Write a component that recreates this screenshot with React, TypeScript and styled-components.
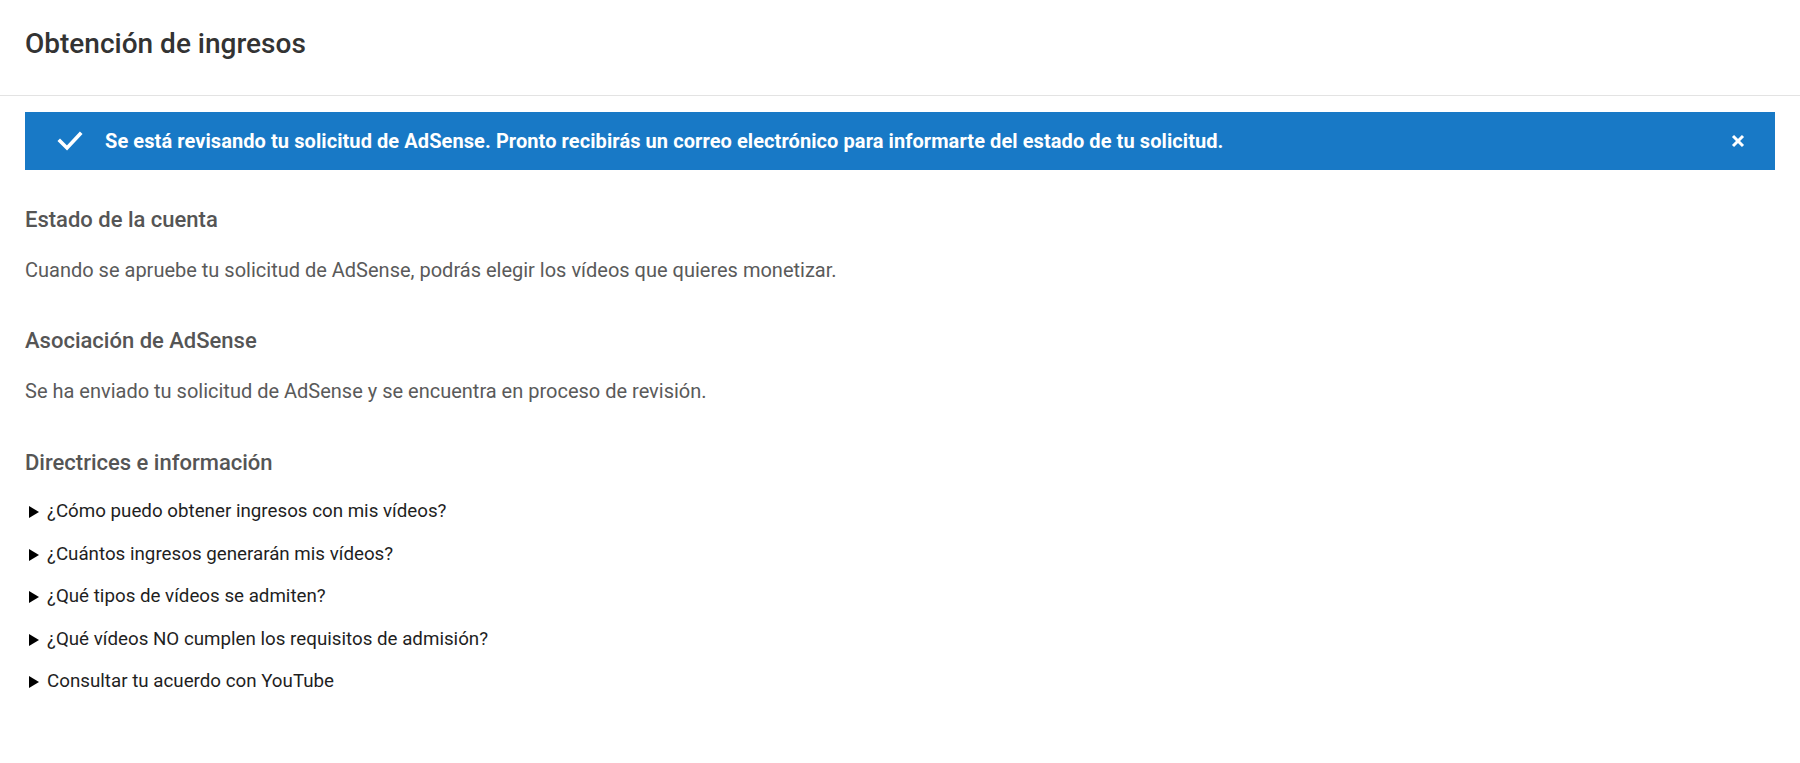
import styled, { createGlobalStyle } from "styled-components";

const GlobalStyle = createGlobalStyle`
  html, body {
    margin: 0;
    padding: 0;
    background: #ffffff;
  }
  body {
    font-family: Roboto, "Noto Sans", Arial, sans-serif;
    -webkit-font-smoothing: antialiased;
  }
  * {
    box-sizing: border-box;
  }
`;

const guidelines = [
  "¿Cómo puedo obtener ingresos con mis vídeos?",
  "¿Cuántos ingresos generarán mis vídeos?",
  "¿Qué tipos de vídeos se admiten?",
  "¿Qué vídeos NO cumplen los requisitos de admisión?",
  "Consultar tu acuerdo con YouTube",
];

const App = () => {
  return (
    <Page>
      <GlobalStyle />
      <Header>
        <Title>Obtención de ingresos</Title>
      </Header>
      <Main>
        <Banner>
          <CheckIcon viewBox="0 0 26 20">
            <polyline points="3,10 10,17 23,3" />
          </CheckIcon>
          <BannerText>
            Se está revisando tu solicitud de AdSense. Pronto recibirás un correo electrónico para
            informarte del estado de tu solicitud.
          </BannerText>
          <CloseButton aria-label="Cerrar">
            <svg viewBox="0 0 14 14" width="14" height="14">
              <line x1="2" y1="2" x2="12" y2="12" />
              <line x1="12" y1="2" x2="2" y2="12" />
            </svg>
          </CloseButton>
        </Banner>

        <Section $gap={38}>
          <SectionTitle>Estado de la cuenta</SectionTitle>
          <SectionText>
            Cuando se apruebe tu solicitud de AdSense, podrás elegir los vídeos que quieres monetizar.
          </SectionText>
        </Section>

        <Section $gap={47}>
          <SectionTitle>Asociación de AdSense</SectionTitle>
          <SectionText>Se ha enviado tu solicitud de AdSense y se encuentra en proceso de revisión.</SectionText>
        </Section>

        <Section $gap={48}>
          <SectionTitle>Directrices e información</SectionTitle>
          <GuideList>
            {guidelines.map((item) => (
              <GuideItem key={item}>
                <Arrow />
                <span>{item}</span>
              </GuideItem>
            ))}
          </GuideList>
        </Section>
      </Main>
    </Page>
  );
};

export default App;

const Page = styled.div`
  width: 100%;
  min-height: 763px;
  background: #ffffff;
`;

const Header = styled.header`
  height: 96px;
  padding: 28px 25px 0;
  border-bottom: 1px solid #e3e3e3;
`;

const Title = styled.h1`
  margin: 0;
  font-size: 28px;
  line-height: 32px;
  font-weight: 500;
  color: #333333;
`;

const Main = styled.main`
  padding: 16px 25px 0;
`;

const Banner = styled.div`
  height: 58px;
  background: #1879c6;
  display: flex;
  align-items: center;
  padding: 0 30px 0 32px;
`;

const CheckIcon = styled.svg`
  width: 26px;
  height: 20px;
  flex-shrink: 0;
  margin-right: 22px;
  polyline {
    fill: none;
    stroke: #ffffff;
    stroke-width: 3.6;
    stroke-linecap: square;
  }
`;

const BannerText = styled.p`
  flex: 1;
  margin: 0;
  font-size: 20px;
  line-height: 24px;
  font-weight: 700;
  letter-spacing: 0.08px;
  color: #ffffff;
`;

const CloseButton = styled.button`
  border: 0;
  background: transparent;
  padding: 0;
  width: 14px;
  height: 14px;
  display: flex;
  cursor: pointer;
  line {
    stroke: #ffffff;
    stroke-width: 3;
  }
`;

const Section = styled.section<{ $gap: number }>`
  margin-top: ${({ $gap }) => $gap}px;
`;

const SectionTitle = styled.h2`
  margin: 0;
  font-size: 22px;
  line-height: 24px;
  font-weight: 500;
  color: #555555;
`;

const SectionText = styled.p`
  margin: 26px 0 0;
  font-size: 20px;
  line-height: 24px;
  font-weight: 400;
  color: #5a5a5a;
`;

const GuideList = styled.ul`
  list-style: none;
  margin: 15px 0 0;
  padding: 0;
`;

const GuideItem = styled.li`
  display: flex;
  align-items: center;
  height: 42.5px;
  font-size: 18.75px;
  color: #1f1f1f;
`;

const Arrow = styled.span`
  width: 0;
  height: 0;
  margin: 2px 8px 0 4px;
  border-left: 10px solid #000000;
  border-top: 6px solid transparent;
  border-bottom: 6px solid transparent;
`;
